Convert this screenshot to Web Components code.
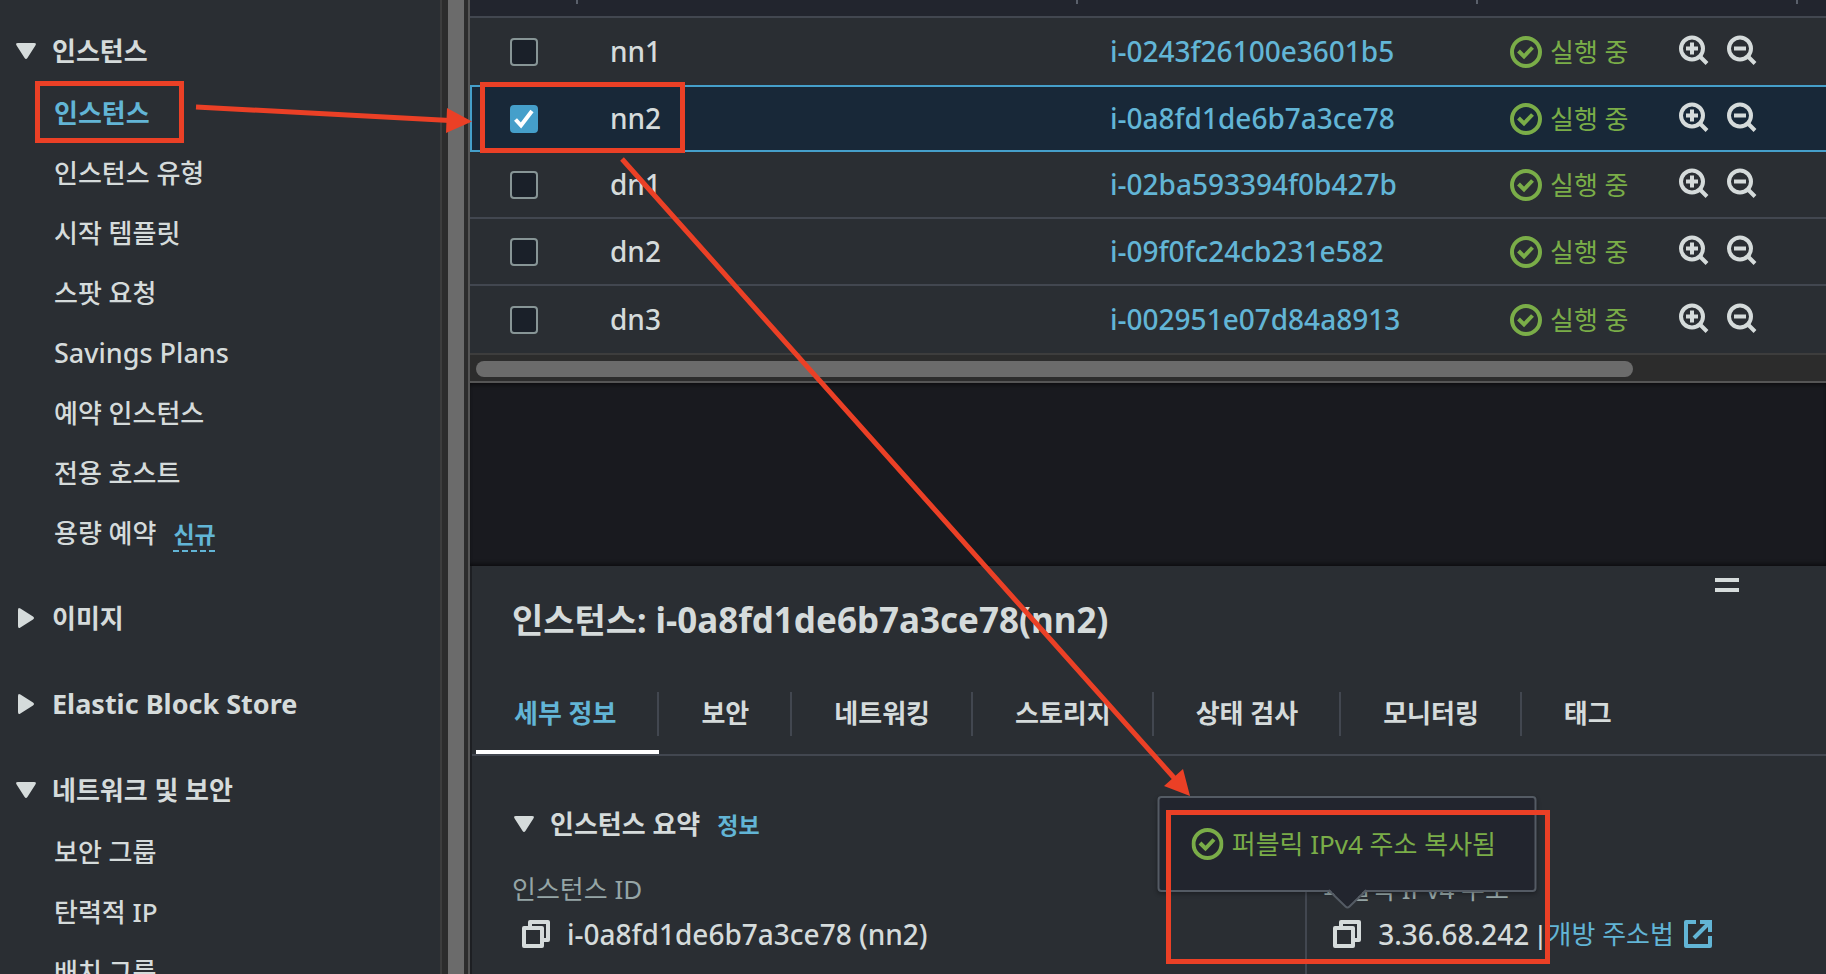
<!DOCTYPE html>
<html lang="ko">
<head>
<meta charset="utf-8">
<meta name="viewport" content="width=device-width, initial-scale=1">
<title>인스턴스 | EC2</title>
<style>
  html, body { height: 100%; margin: 0; }
  body {
    --text: #d5dbdb;
    --muted: #95a5a6;
    --link: #62b5d6;
    --green: #7aad48;
    --surface: #2a2e33;
    --header: #22252e;
    --canvas: #191a1f;
    --line: #424750;
    background: var(--canvas);
    color: var(--text);
    font: 500 26px/32px "Noto Sans", "Noto Sans CJK KR", sans-serif;
    overflow: hidden;
  }
</style>
</head>
<body>
<ec2-console></ec2-console>

<script>
const define = (name, html, setup) => customElements.define(name, class extends HTMLElement {
  constructor() {
    super();
    const t = document.createElement('template');
    t.innerHTML = html;
    this.attachShadow({ mode: 'open' }).append(t.content.cloneNode(true));
  }
  connectedCallback() { if (setup) setup(this, this.shadowRoot); }
});

const ICONS = {
  down: ['0 0 20 16', 20, 16, '<path d="M2 0h16q3 0 1.4 2.400l-8 12.600q-1.400 2-2.800 0l-8-12.600q-1.600-2.400 1.400-2.400z" fill="currentColor"/>'],
  right: ['0 0 16 20', 16, 20, '<path d="M0 2v16q0 3 2.400 1.400l12.600-8q2-1.400 0-2.800l-12.600-8q-2.400-1.600-2.400 1.400z" fill="currentColor"/>'],
  check: ['0 0 32 32', 32, 32, '<g fill="none" stroke="currentColor" stroke-width="4"><circle cx="16" cy="16" r="14"/><path d="M8.500 15l5.500 5.500 8.500-9"/></g>'],
  zoomin: ['0 0 30 30', 30, 30, '<g fill="none" stroke="currentColor" stroke-width="4"><circle cx="13" cy="13.500" r="11"/><path d="M20.500 21l7.500 7.500M13 7.500v12M7 13.500h12"/></g>'],
  zoomout: ['0 0 30 30', 30, 30, '<g fill="none" stroke="currentColor" stroke-width="4"><circle cx="13" cy="13.500" r="11"/><path d="M20.500 21l7.500 7.500M7 13.500h12"/></g>'],
  copy: ['0 0 28 28', 28, 28, '<g fill="none" stroke="currentColor" stroke-width="4" stroke-linejoin="round"><path d="M2 8h18v18H2z"/><path d="M8 8V2h18v18h-6"/></g>'],
  external: ['0 0 28 28', 28, 28, '<g fill="none" stroke="currentColor" stroke-width="4"><path d="M12 2H2v24h24V16" stroke-linejoin="round"/><path d="M16 2h10v10M26 2L10 18"/></g>'],
};
define('ui-icon', `<style>:host{display:block;flex:none} svg{display:block}</style>`, (el, root) => {
  const [box, w, h, body] = ICONS[el.getAttribute('name')];
  root.innerHTML += `<svg viewBox="${box}" width="${w}" height="${h}" aria-hidden="true">${body}</svg>`;
});

define('nav-section', `
<style>
  :host { display: block; margin-bottom: 26px; }
  :host(:not([open])) { margin-bottom: 25px; }
  button { all: unset; box-sizing: border-box; display: flex; align-items: center; gap: 16px; width: 100%; height: 60px; padding-left: 16px; font-weight: 700; cursor: pointer; white-space: nowrap; }
  .arrow { width: 20px; display: grid; place-items: center; }
  .list { padding-top: 1px; }
</style>
<button type="button"><span class="arrow"></span><slot name="title"></slot></button>
<div class="list"><slot></slot></div>`, (el, root) => {
  const open = el.hasAttribute('open');
  root.querySelector('.arrow').innerHTML = `<ui-icon name="${open ? 'down' : 'right'}"></ui-icon>`;
  root.querySelector('button').setAttribute('aria-expanded', open);
});

define('nav-item', `
<style>
  :host { display: flex; align-items: center; gap: 17px; height: 60px; padding-left: 54px; white-space: nowrap; }
  a { color: inherit; text-decoration: none; padding-top: 2px; }
  :host([current]) { color: var(--link); font-weight: 700; }
</style>
<a href="#"><slot></slot></a><slot name="badge"></slot>`, (el, root) => {
  if (el.hasAttribute('current')) root.querySelector('a').setAttribute('aria-current', 'page');
});

define('new-badge', `
<style>
  :host { display: block; }
  a { display: block; color: var(--link); font-size: 23px; line-height: 32px; font-weight: 700; text-decoration: none; padding: 6px 0 2px;
      background: repeating-linear-gradient(90deg, var(--link) 0 6px, transparent 6px 9px) left bottom / 100% 2px no-repeat; }
</style><a href="#"><slot></slot></a>`);

define('side-nav', `
<style>
  :host { display: flex; height: 100%; overflow: hidden; background: var(--surface); }
  nav { flex: 1; padding-top: 21px; overflow: hidden; }
  .latin { font-size: 27px; }
  .track { flex: none; box-sizing: border-box; width: 30px; padding: 0 4px 0 6px; background: #2c2c2c; border-left: 2px solid #3d3d3d; border-right: 2px solid #555; }
  .thumb { height: 100%; background: #6b6b6b; }
</style>
<nav aria-label="EC2">
  <nav-section open><span slot="title">인스턴스</span>
    <nav-item current>인스턴스</nav-item>
    <nav-item>인스턴스 유형</nav-item>
    <nav-item>시작 템플릿</nav-item>
    <nav-item>스팟 요청</nav-item>
    <nav-item class="latin">Savings Plans</nav-item>
    <nav-item>예약 인스턴스</nav-item>
    <nav-item>전용 호스트</nav-item>
    <nav-item>용량 예약<new-badge slot="badge">신규</new-badge></nav-item>
  </nav-section>
  <nav-section><span slot="title">이미지</span></nav-section>
  <nav-section><span slot="title" class="latin">Elastic Block Store</span></nav-section>
  <nav-section open><span slot="title">네트워크 및 보안</span>
    <nav-item>보안 그룹</nav-item>
    <nav-item>탄력적 IP</nav-item>
    <nav-item>배치 그룹</nav-item>
  </nav-section>
</nav>
<div class="track"><div class="thumb"></div></div>`);

define('status-label', `
<style>:host { display: flex; align-items: center; gap: 8px; color: var(--green); font-weight: 400; white-space: nowrap; }</style>
<ui-icon name="check"></ui-icon><span><slot></slot></span>`);

define('instance-table', `
<style>
  :host { display: block; background: var(--surface); border-bottom: 2px solid #555; }
  table { width: 100%; table-layout: fixed; border-collapse: separate; border-spacing: 0; }
  col.pick { width: 108px; } col.name { width: 500px; } col.id { width: 400px; } col.state { width: 320px; }
  th, td { padding: 0; text-align: left; box-sizing: border-box; overflow: hidden; white-space: nowrap; }
  th { height: 18px; background: var(--header); border-bottom: 2px solid var(--line); vertical-align: top; }
  th i { display: block; width: 2px; height: 4px; margin-left: auto; background: #5a606b; }
  td { height: 67px; padding-left: 32px; border-bottom: 2px solid var(--line); }
  tr.plain td { border-bottom: 0; }
  td:first-child { padding-left: 40px; }
  tr.selected td { background: #182838; border-top: 2px solid #459fca; border-bottom-color: #459fca; }
  tr.selected td:first-child { border-left: 2px solid #459fca; padding-left: 38px; }
  input { appearance: none; display: block; box-sizing: border-box; width: 28px; height: 28px; margin: 0; border: 2px solid #879596; border-radius: 4px; background: #1a2029; }
  input:checked { border-color: #459fca; background: #459fca url('data:image/svg+xml,<svg xmlns="http://www.w3.org/2000/svg" viewBox="0 0 24 24"><path d="M3.500 12.500l5.500 6L20 4" fill="none" stroke="white" stroke-width="4"/></svg>') center / 24px 24px; }
  td.text { font-size: 28px; padding-bottom: 2px; }
  a { color: var(--link); text-decoration: none; }
  .cell { display: flex; align-items: center; padding-top: 1px; }
  .zoom { display: flex; gap: 18px; margin-left: 50px; }
  .zoom button { all: unset; cursor: pointer; padding-bottom: 5px; }
  .bar { height: 28px; box-sizing: border-box; padding: 6px 0 4px 6px; background: #2c2c2c; border-top: 2px solid #3d3d3d; }
  .thumb { width: 1157px; max-width: 86%; height: 16px; border-radius: 8px; background: #6b6b6b; }
</style>
<table>
  <colgroup><col class="pick"><col class="name"><col class="id"><col class="state"><col></colgroup>
  <thead><tr><th><i></i></th><th><i></i></th><th><i></i></th><th><i></i></th><th></th></tr></thead>
  <tbody></tbody>
</table>
<div class="bar"><div class="thumb"></div></div>`, (el, root) => {
  const rows = [
    ['nn1', 'i-0243f26100e3601b5', 'plain'],
    ['nn2', 'i-0a8fd1de6b7a3ce78', 'selected'],
    ['dn1', 'i-02ba593394f0b427b', ''],
    ['dn2', 'i-09f0fc24cb231e582', ''],
    ['dn3', 'i-002951e07d84a8913', 'plain'],
  ];
  root.querySelector('tbody').innerHTML = rows.map(([name, id, kind]) => `
    <tr class="${kind}">
      <td><input type="checkbox" id="${name}" ${kind === 'selected' ? 'checked' : ''}></td>
      <td class="text"><label for="${name}">${name}</label></td>
      <td class="text"><a href="#">${id}</a></td>
      <td><div class="cell"><status-label>실행 중</status-label>
        <div class="zoom"><button type="button" aria-label="확대"><ui-icon name="zoomin"></ui-icon></button><button type="button" aria-label="축소"><ui-icon name="zoomout"></ui-icon></button></div></div></td>
      <td></td>
    </tr>`).join('');
});

define('tab-strip', `
<style>
  :host { display: flex; border-bottom: 2px solid var(--line); padding-left: 4px; }
  ::slotted(button) { all: unset; box-sizing: border-box; height: 86px; padding: 4px 43px 0 42px; font-weight: 700; white-space: nowrap; cursor: pointer;
    background: linear-gradient(var(--line), var(--line)) right 24px / 2px 44px no-repeat; }
  ::slotted(button:first-child) { padding: 8px 43px 0 38px; border-bottom: 4px solid #fff; color: var(--link); }
  ::slotted(button:last-child) { background: none; }
</style>
<slot></slot>`);

define('copy-tip', `
<style>
  :host { position: absolute; left: 50%; bottom: calc(100% + 28px); transform: translateX(-50%); box-sizing: border-box; width: 379px; height: 96px; padding: 30px 32px; font-size: 26px; background: var(--header); border: 2px solid #545b64; border-radius: 4px; box-shadow: 0 2px 4px rgba(0,0,0,.3); }
  svg { position: absolute; left: 50%; top: 100%; margin-left: -19px; display: block; margin-top: -1px; }
</style>
<status-label><slot></slot></status-label>
<svg width="38" height="22" viewBox="0 0 38 22"><path d="M1 0L17 17.500q2 2 4 0L37 0z" fill="#22252e"/><path d="M0 1L17 17.500q2 2 4 0L38 1" fill="none" stroke="#545b64" stroke-width="2"/></svg>`);

define('copy-field', `
<style>
  :host { display: block; white-space: nowrap; }
  .label { color: var(--muted); height: 32px; font-weight: 400; }
  .value { display: flex; align-items: center; height: 44px; padding: 7px 0 0 10px; font-size: 28px; }
  .copy { position: relative; margin-right: 17px; }
  button { all: unset; display: block; cursor: pointer; }
</style>
<div class="label"><slot name="label"></slot></div>
<div class="value"><span class="copy"><button type="button" aria-label="복사"><ui-icon name="copy"></ui-icon></button><slot name="tip"></slot></span><slot></slot></div>`);

define('detail-panel', `
<style>
  :host { display: flex; flex-direction: column; box-sizing: border-box; background: var(--surface); border-left: 2px solid #1d1f23; overflow: hidden; }
  .grip { all: unset; align-self: flex-end; margin: 12px 87px 0 0; width: 24px; height: 4px; border-top: 4px solid; border-bottom: 4px solid; padding: 1px 0; cursor: row-resize; }
  h2 { margin: 6px 0 0 40px; font-size: 34px; line-height: 44px; font-weight: 700; white-space: nowrap; }
  h2 span { font-size: 35px; }
  tab-strip { margin-top: 26px; }
  .summary { display: flex; align-items: center; height: 36px; margin: 50px 0 0 42px; }
  h3 { margin: 0 17px 0 16px; font-size: 26px; font-weight: 700; white-space: nowrap; }
  a { color: var(--link); text-decoration: none; }
  .info { font-size: 23px; font-weight: 700; padding-top: 2px; }
  .fields { flex: 1; display: grid; grid-template-columns: 8fr 5fr; margin-top: 31px; }
  .fields > * { padding-left: 40px; }
  .fields > :last-child { padding-left: 16px; border-left: 2px solid var(--line); }
  .ext { display: flex; align-items: center; gap: 10px; font-size: 26px; font-weight: 400; }
  .bar { margin-left: 4px; font-size: 26px; }
</style>
<button class="grip" type="button" aria-label="크기 조정"></button>
<h2>인스턴스: <span>i-0a8fd1de6b7a3ce78(nn2)</span></h2>
<tab-strip>
  <button type="button">세부 정보</button><button type="button">보안</button><button type="button">네트워킹</button><button type="button">스토리지</button><button type="button">상태 검사</button><button type="button">모니터링</button><button type="button">태그</button>
</tab-strip>
<div class="summary"><ui-icon name="down"></ui-icon><h3>인스턴스 요약</h3><a class="info" href="#">정보</a></div>
<div class="fields">
  <copy-field><span slot="label">인스턴스 ID</span>i-0a8fd1de6b7a3ce78 (nn2)</copy-field>
  <copy-field><span slot="label">퍼블릭 IPv4 주소</span><copy-tip slot="tip">퍼블릭 IPv4 주소 복사됨</copy-tip><span>3.36.68.242</span><span class="bar">|</span><a class="ext" href="#">개방 주소법<ui-icon name="external"></ui-icon></a></copy-field>
</div>`);

define('guide-marks', `
<style>:host { position: absolute; inset: 0; pointer-events: none; overflow: hidden; } svg { display: block; width: 100%; height: 100%; }</style>
<svg fill="none" stroke="#eb4026" stroke-width="5" aria-hidden="true">
  <rect x="37.500" y="83.500" width="144" height="57"/>
  <rect x="482.500" y="84.500" width="200" height="66"/>
  <rect x="1168.500" y="812.500" width="379" height="149"/>
  <path d="M196 107L450 120.500M622 159L1176 780"/>
  <path d="M447 108L472 121.500 446 133zM1183 769L1190 796 1164 786z" fill="#eb4026" stroke="none"/>
</svg>`);

define('ec2-console', `
<style>
  :host { position: relative; display: grid; grid-template-columns: 470px minmax(0, 1fr); height: 100vh; overflow: hidden; }
  main { display: flex; flex-direction: column; min-height: 0; }
  .space { flex: 183 0 0; background: var(--canvas); box-shadow: inset 0 4px 4px -2px #0008, inset 0 -4px 4px -2px #0008; }
  detail-panel { flex: 408 0 0; }
</style>
<side-nav></side-nav>
<main>
  <instance-table></instance-table>
  <div class="space"></div>
  <detail-panel></detail-panel>
</main>
<guide-marks></guide-marks>`);
</script>
</body>
</html>
